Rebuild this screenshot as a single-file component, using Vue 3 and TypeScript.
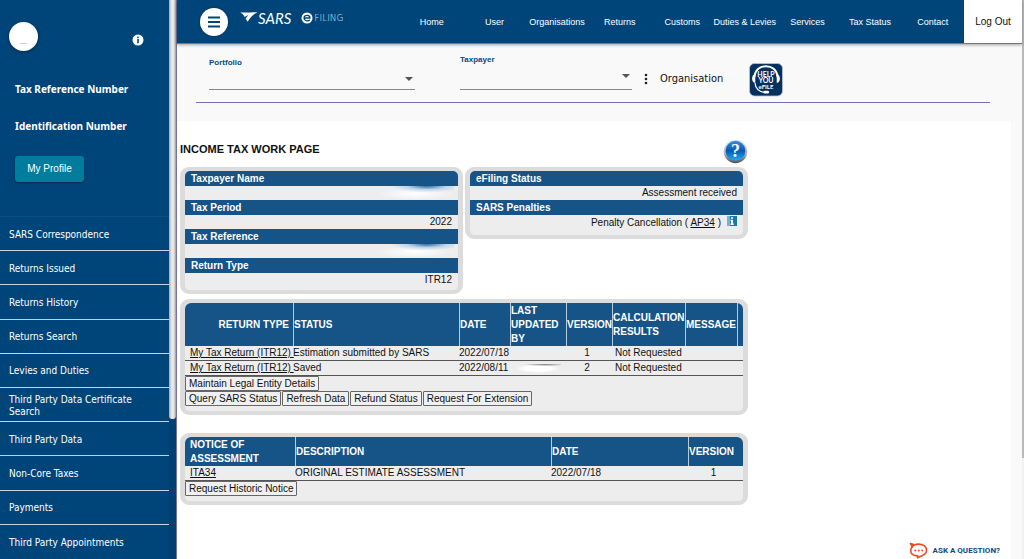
<script setup lang="ts">
import { ref } from 'vue'

interface ReturnRow {
  type: string
  status: string
  date: string
  version: number
  result: string
  masked: boolean
}

const navItems: string[] = [
  'Home', 'User', 'Organisations', 'Returns', 'Customs',
  'Duties & Levies', 'Services', 'Tax Status', 'Contact',
]

const sideItems: string[] = [
  'SARS Correspondence', 'Returns Issued', 'Returns History', 'Returns Search',
  'Levies and Duties', 'Third Party Data Certificate Search', 'Third Party Data',
  'Non-Core Taxes', 'Payments', 'Third Party Appointments',
]

const details = [
  { label: 'Taxpayer Name', value: '', masked: true },
  { label: 'Tax Period', value: '2022', masked: false },
  { label: 'Tax Reference', value: '', masked: true },
  { label: 'Return Type', value: 'ITR12', masked: false },
]

const returnRows: ReturnRow[] = [
  { type: 'My Tax Return (ITR12)', status: 'Estimation submitted by SARS', date: '2022/07/18', version: 1, result: 'Not Requested', masked: false },
  { type: 'My Tax Return (ITR12)', status: 'Saved', date: '2022/08/11', version: 2, result: 'Not Requested', masked: true },
]

const actions: string[] = ['Query SARS Status', 'Refresh Data', 'Refund Status', 'Request For Extension']

const portfolio = ref('')
const taxpayer = ref('')
</script>

<template>
  <div class="page">
    <aside class="sidebar">
      <div class="side-body">
        <div class="profile">
          <div class="profile-top">
            <span class="avatar"><i></i></span>
            <svg class="info" viewBox="0 0 12 12" aria-hidden="true">
              <circle cx="6" cy="6" r="5.5" fill="#fff" />
              <circle cx="6" cy="3.4" r="0.9" fill="#00457a" />
              <rect x="5.2" y="5" width="1.6" height="4.2" fill="#00457a" />
            </svg>
          </div>
          <h2>Tax Reference Number</h2>
          <h2>Identification Number</h2>
          <button type="button" class="profile-btn">My Profile</button>
        </div>
        <nav class="side-nav">
          <a v-for="item in sideItems" :key="item" href="#">{{ item }}</a>
        </nav>
      </div>
      <div class="side-track"><div class="side-thumb"></div></div>
    </aside>

    <div class="main">
      <header class="topbar">
        <button type="button" class="menu-btn" aria-label="Menu">
          <svg viewBox="0 0 28 28"><path d="M8 9.500h12M8 14h12M8 18.500h12" stroke="#00457a" stroke-width="2" /></svg>
        </button>
        <a href="#" class="brand">
          <svg class="bird" viewBox="0 0 18 12" aria-hidden="true">
            <path d="M0 .6C4 .1 10 .8 17.600.2 14 1.800 11 4.500 7.600 9.800L5.600 6.500 8.600 2.800 4.600 5C3.800 3 2.200 1.500 0 .6z" fill="#fff" />
          </svg>
          <span class="sars">SARS</span>
          <svg class="e-mark" viewBox="0 0 12 12" aria-hidden="true">
            <circle cx="6" cy="6" r="5.500" fill="#fff" />
            <path d="M9 8C7.500 9.400 3.300 9.400 3 6.200 2.800 2.400 9.200 2.400 9 6H3" fill="none" stroke="#00457a" stroke-width="1.300" />
          </svg>
          <span class="filing">FILING</span>
        </a>
        <nav class="top-nav">
          <a v-for="item in navItems" :key="item" href="#">{{ item }}</a>
        </nav>
        <button type="button" class="logout">Log Out</button>
      </header>

      <section class="context">
        <div class="context-row">
          <div class="field portfolio">
            <label for="portfolio">Portfolio</label>
            <div class="select-wrap"><select id="portfolio" v-model="portfolio"><option value=""></option></select></div>
          </div>
          <div class="field taxpayer">
            <label for="taxpayer">Taxpayer</label>
            <div class="select-wrap"><select id="taxpayer" v-model="taxpayer"><option value=""></option></select></div>
          </div>
          <button type="button" class="organisation">
            <svg viewBox="0 0 4 12" aria-hidden="true"><circle cx="2" cy="2" r="1.300" /><circle cx="2" cy="6" r="1.300" /><circle cx="2" cy="10" r="1.300" /></svg>
            Organisation
          </button>
          <a href="#" class="help-efile" aria-label="Help You eFile">
            <svg viewBox="0 0 34 34">
              <rect x="0.500" y="0.500" width="33" height="32.500" rx="5" fill="#06315f" stroke="#b8c4d3" stroke-width="0.800" />
              <path d="M5.500 14C6.500-.5 27.500-.5 28.500 14" fill="none" stroke="#fff" stroke-width="2" />
              <path d="M6.300 11C2 11.500 2 19.500 6.300 20zM27.700 11C32 11.500 32 19.500 27.700 20z" fill="#fff" />
              <path d="M6 20C6.500 25.500 10 28.500 15 29.300" fill="none" stroke="#fff" stroke-width="1.200" />
              <rect x="14.500" y="27.800" width="5.500" height="2.700" rx="1.300" fill="#fff" />
              <g fill="#fff" font-family="Lato, sans-serif" font-weight="700" text-anchor="middle">
                <text x="17" y="13.500" font-size="7">HELP</text>
                <text x="17" y="19.800" font-size="7">YOU</text>
                <text x="17" y="25.500" font-size="6">eFILE</text>
              </g>
            </svg>
          </a>
        </div>
      </section>

      <main class="content">
        <div class="work">
          <div class="title-row">
            <h1>INCOME TAX WORK PAGE</h1>
            <button type="button" class="help" aria-label="Help">
              <svg viewBox="0 0 25 25">
                <defs>
                  <linearGradient id="rim" x1="0" y1="0" x2="0" y2="1"><stop offset="0" stop-color="#e9edf2" /><stop offset=".6" stop-color="#aab0bb" /><stop offset="1" stop-color="#4d5058" /></linearGradient>
                  <linearGradient id="ball" x1="0" y1="0" x2="0" y2="1"><stop offset="0" stop-color="#3c8edb" /><stop offset=".5" stop-color="#0758b5" /><stop offset="1" stop-color="#19b0f5" /></linearGradient>
                </defs>
                <circle cx="12.500" cy="12.500" r="11.800" fill="url(#rim)" />
                <circle cx="12.500" cy="11.700" r="9.900" fill="url(#ball)" />
                <text x="12.500" y="18" text-anchor="middle" font-family="Liberation Serif, serif" font-weight="700" font-size="18" fill="#fff">?</text>
              </svg>
            </button>
          </div>

          <div class="panels">
            <dl class="panel facts">
              <template v-for="d in details" :key="d.label">
                <dt>{{ d.label }}</dt>
                <dd><span v-if="d.masked" class="smudge"></span>{{ d.value }}</dd>
              </template>
            </dl>
            <dl class="panel facts">
              <dt>eFiling Status</dt>
              <dd>Assessment received</dd>
              <dt>SARS Penalties</dt>
              <dd class="penalty">
                <span>Penalty Cancellation ( <a href="#">AP34</a> )</span>
                <svg viewBox="0 0 10 10" aria-hidden="true"><rect width="10" height="10" fill="#1878b0" /><path d="M0 0h3v10H0z" fill="#6db3dc" /><path d="M4 1.200h2v1.500H4zM3.400 3.800H6v3.700h.8V9H3.400V7.500H4V5H3.400z" fill="#fff" /></svg>
              </dd>
            </dl>
          </div>

          <section class="panel returns">
            <table>
              <colgroup><col class="c-type" /><col class="c-status" /><col class="c-date" /><col class="c-by" /><col class="c-version" /><col class="c-calc" /><col /><col class="c-end" /></colgroup>
              <thead>
                <tr>
                  <th scope="col" class="right">RETURN TYPE</th><th scope="col">STATUS</th><th scope="col">DATE</th><th scope="col">LAST UPDATED BY</th><th scope="col">VERSION</th><th scope="col">CALCULATION RESULTS</th><th scope="col">MESSAGE</th><th></th>
                </tr>
              </thead>
              <tbody>
                <tr v-for="row in returnRows" :key="row.version">
                  <td class="first"><a href="#">{{ row.type }}&nbsp;</a></td>
                  <td>{{ row.status }}</td>
                  <td>{{ row.date }}</td>
                  <td><span v-if="row.masked" class="name-smudge"></span></td>
                  <td class="center">{{ row.version }}</td>
                  <td class="result">{{ row.result }}</td>
                  <td></td>
                  <td></td>
                </tr>
              </tbody>
            </table>
            <div class="actions"><button type="button">Maintain Legal Entity Details</button></div>
            <div class="actions"><button v-for="a in actions" :key="a" type="button">{{ a }}</button></div>
          </section>

          <section class="panel notices">
            <table>
              <colgroup><col class="n-notice" /><col class="n-desc" /><col class="n-date" /><col /></colgroup>
              <thead>
                <tr><th scope="col" class="first">NOTICE OF ASSESSMENT</th><th scope="col">DESCRIPTION</th><th scope="col">DATE</th><th scope="col">VERSION</th></tr>
              </thead>
              <tbody>
                <tr><td class="first"><a href="#">ITA34</a></td><td>ORIGINAL ESTIMATE ASSESSMENT</td><td>2022/07/18</td><td class="center">1</td></tr>
              </tbody>
            </table>
            <div class="actions"><button type="button">Request Historic Notice</button></div>
          </section>
        </div>
      </main>

      <button type="button" class="ask">
        <svg viewBox="0 0 19 17" aria-hidden="true">
          <path d="M1.500 1.500L5.500 3C10 .8 17.500 3 17.500 8.300 17.500 11 15.500 12.800 13 13.700L8.500 15.700 8.800 13.900C4 14 1.500 11.500 1.700 8.300 1.800 6.500 2.600 5.300 3.500 4.600z" fill="#fff" stroke="#ee4a23" stroke-width="1.600" stroke-linejoin="round" />
          <path d="M1 1L6.500 2.500 2.800 6z" fill="#ee4a23" />
          <g fill="#ee4a23"><circle cx="6.300" cy="8.500" r="1" /><circle cx="9.800" cy="8.500" r="1" /><circle cx="13.300" cy="8.500" r="1" /></g>
        </svg>
        ASK A QUESTION?
      </button>
    </div>
    <div class="page-scroll"><div></div></div>
  </div>
</template>

<style>
body {
  margin: 0;
}
</style>

<style scoped>
* {
  box-sizing: border-box;
}
.page {
  display: flex;
  height: 100vh;
  overflow: hidden;
  background: #fff;
  color: #111;
  font: 10px/14px "Liberation Sans", Arial, sans-serif;
}
button {
  font: inherit;
  color: inherit;
  border: 0;
  padding: 0;
  background: none;
  cursor: pointer;
}
a {
  color: inherit;
}
svg {
  display: block;
}

/* Sidebar */
.sidebar {
  display: flex;
  flex: none;
  width: 177px;
  background: #00457a;
  border-right: 1px solid #74749f;
  color: #fff;
}
.side-body {
  display: flex;
  flex-direction: column;
  flex: 1;
}
.side-track {
  width: 7px;
  background: #003f72;
}
.side-thumb {
  height: 75%;
  background: linear-gradient(90deg, #aaa, #ececec 40%, #e4e4e4 70%, #999);
  border-radius: 0 0 3px 3px;
}
.profile {
  height: 217px;
  padding: 18px 15px 0;
  border-bottom: 1px solid #0a5084;
}
.profile-top {
  display: flex;
  justify-content: space-between;
  align-items: center;
  height: 36px;
  margin: 0 10px 26px -6px;
}
.avatar {
  display: flex;
  align-items: flex-end;
  justify-content: center;
  width: 29px;
  height: 29px;
  padding-bottom: 7px;
  border-radius: 50%;
  background: #fff;
  box-shadow: 0 1px 4px rgba(0, 0, 0, 0.4);
}
.avatar i {
  width: 7px;
  height: 1px;
  background: #c8d2dc;
}
.info {
  width: 12px;
  height: 12px;
  margin-top: 8px;
}
.profile h2 {
  margin: 0 0 19px;
  font: 700 10px/18px "Noto Sans", Tahoma, sans-serif;
  white-space: nowrap;
}
.profile-btn {
  width: 69px;
  height: 26px;
  margin-top: 2px;
  border-radius: 3px;
  background: #007c9d;
  box-shadow: 0 1px 2px rgba(0, 0, 0, 0.4);
}
.side-nav {
  display: grid;
  grid-auto-rows: 1fr;
  flex: 1;
}
.side-nav a {
  display: flex;
  align-items: center;
  padding: 2px 30px 0 9px;
  border-bottom: 1px solid #c3d4e4;
  font: 10px/12px "DejaVu Sans Condensed", Tahoma, sans-serif;
  text-decoration: none;
}
.side-nav a:last-child {
  border-bottom: 0;
}

/* Top bar */
.main {
  position: relative;
  display: flex;
  flex-direction: column;
  flex: 1;
  min-width: 0;
  background: #f9f9f9;
}
.topbar {
  display: flex;
  align-items: center;
  height: 44px;
  flex: none;
  background: #00457a;
  color: #fff;
  border-bottom: 1px solid #777a7c;
  box-shadow: 0 1px 3px rgba(0, 0, 0, 0.35);
}
.menu-btn {
  width: 28px;
  height: 28px;
  margin-left: 23px;
  border-radius: 50%;
  background: #fff;
  box-shadow: 0 0 3px rgba(0, 0, 0, 0.3);
}
.brand {
  display: flex;
  align-items: center;
  height: 22px;
  margin: 0 0 8px 12px;
  color: #fff;
  text-decoration: none;
}
.bird {
  width: 18px;
  height: 12px;
}
.sars {
  font: italic 15px/22px Lato, sans-serif;
}
.e-mark {
  width: 12px;
  height: 12px;
  margin: 0 1px 0 10px;
}
.filing {
  font: 200 9px/22px "DejaVu Sans Light", "DejaVu Sans", sans-serif;
  color: #dce8f2;
}
.top-nav {
  display: grid;
  grid-template-columns: repeat(9, minmax(0, 1fr));
  flex: 1;
  margin-left: 57px;
  font-size: 9px;
}
.top-nav a {
  display: flex;
  justify-content: center;
  color: #fff;
  text-decoration: none;
  white-space: nowrap;
}
.logout {
  align-self: stretch;
  width: 58px;
  background: #fff;
  color: #111;
}

/* Portfolio and taxpayer selection */
.context {
  flex: none;
  height: 77px;
  padding: 0 32px 0 19px;
}
.context-row {
  display: flex;
  height: 59px;
  padding-left: 13px;
  align-items: flex-end;
  border-bottom: 1px solid #6c75b3;
}
.field {
  display: flex;
  flex-direction: column;
  margin-bottom: 12px;
  border-bottom: 1px solid #888;
}
.field label {
  color: #0b4a80;
  font-size: 8px;
  line-height: 12px;
  font-weight: 700;
}
.portfolio {
  flex: 0 0 206px;
}
.taxpayer {
  flex: 0 0 172px;
  margin-left: 45px;
}
.select-wrap {
  position: relative;
}
.select-wrap::after {
  content: "";
  position: absolute;
  right: 2px;
  top: 8px;
  border: 4px solid transparent;
  border-top-color: #555;
  border-bottom: 0;
  pointer-events: none;
}
.field select {
  display: block;
  width: 100%;
  height: 23px;
  border: 0;
  background: transparent;
  appearance: none;
}
.field.portfolio select {
  height: 20px;
}
.organisation {
  display: flex;
  align-items: center;
  gap: 12px;
  margin: 0 0 13px 12px;
  font: 11px/20px "DejaVu Sans Condensed", Tahoma, sans-serif;
}
.organisation svg {
  width: 4px;
  height: 12px;
  fill: #222;
}
.help-efile {
  margin: 0 0 5px 26px;
}
.help-efile svg {
  width: 34px;
  height: 34px;
}

/* Work page */
.content {
  flex: 1;
  margin-right: 11px;
  padding: 18px 4px 0 3px;
  background: #fff;
}
.work {
  max-width: 568px;
}
.title-row {
  display: flex;
  justify-content: space-between;
  align-items: flex-start;
  height: 28px;
}
h1 {
  margin: 3px 0 0;
  font-size: 11px;
  line-height: 14px;
}
.help svg {
  width: 25px;
  height: 25px;
}
.panels {
  display: grid;
  grid-template-columns: 1fr 1fr;
  align-items: start;
  gap: 2px;
  margin-bottom: 5px;
}
.panel {
  margin: 0;
  padding-bottom: 5px;
  border: 4px solid #dcdcdc;
  border-width: 4px 5px;
  border-radius: 9px;
  background: #ededed;
}
.facts {
  padding-bottom: 3px;
}
.panel dt {
  padding: 0 6px;
  background: #165387;
  color: #fff;
  font-weight: 700;
  line-height: 15px;
}
.panel dt:first-child {
  border-radius: 5px 5px 0 0;
}
.panel dd {
  position: relative;
  height: 14px;
  margin: 0;
  padding: 0 6px;
  text-align: right;
}
.smudge {
  position: absolute;
  right: 4px;
  top: 0;
  width: 78px;
  height: 13px;
  background: radial-gradient(ellipse 46% 50% at 65% 0, #2c6aa0, rgba(120, 175, 225, 0.4) 55%, transparent), radial-gradient(ellipse 50% 50% at 50% 60%, #fff, transparent);
}
.panel .penalty {
  display: flex;
  justify-content: flex-end;
  gap: 6px;
  height: 17px;
  line-height: 16px;
}
.penalty svg {
  width: 10px;
  height: 10px;
  margin-top: 1px;
}
table {
  width: 100%;
  border-collapse: separate;
  border-spacing: 0;
  table-layout: fixed;
}
th,
td {
  padding: 0;
  text-align: left;
}
th {
  height: 43px;
  background: #165387;
  color: #fff;
  border-left: 1px solid #b7cbdc;
  overflow-wrap: normal;
}
.notices th {
  height: 29px;
}
th:first-child {
  border-left: 0;
  border-top-left-radius: 6px;
}
th:last-child {
  border-top-right-radius: 6px;
}
td {
  height: 15px;
  border-bottom: 1px solid #555;
  white-space: nowrap;
}
.right {
  padding-right: 4px;
  text-align: right;
}
.first {
  padding-left: 5px;
}
.center {
  padding-right: 4px;
  text-align: center;
}
.result {
  padding-left: 3px;
}
.name-smudge {
  display: block;
  width: 46px;
  height: 9px;
  margin-left: 5px;
  background: radial-gradient(ellipse 45% 25% at 65% 0, #777, transparent), radial-gradient(ellipse at center, #fff 40%, transparent 70%);
}
.c-type { width: 108px; }
.c-status { width: 166px; }
.c-date { width: 51px; }
.c-by { width: 56px; }
.c-version { width: 46px; }
.c-calc { width: 73px; }
.c-end { width: 6px; }
.n-notice { width: 110px; }
.n-desc { width: 256px; }
.n-date { width: 137px; }
.returns {
  margin-bottom: 18px;
}
.actions {
  display: flex;
  gap: 1px;
  height: 15px;
}
.actions button {
  padding: 0 3px;
  border: 1px solid #666;
  border-radius: 1px;
  background: #f0f0f0;
  line-height: 12px;
}
.ask {
  position: absolute;
  right: 22px;
  bottom: 0;
  display: flex;
  align-items: center;
  gap: 5px;
  font: 700 8px/17px Roboto, sans-serif;
  color: #0b4a80;
}
.ask svg {
  width: 19px;
  height: 17px;
}
.page-scroll {
  flex: none;
  width: 2px;
  background: #f1f1f1;
}
.page-scroll div {
  height: 82%;
  background: #b9b9b9;
}
</style>
